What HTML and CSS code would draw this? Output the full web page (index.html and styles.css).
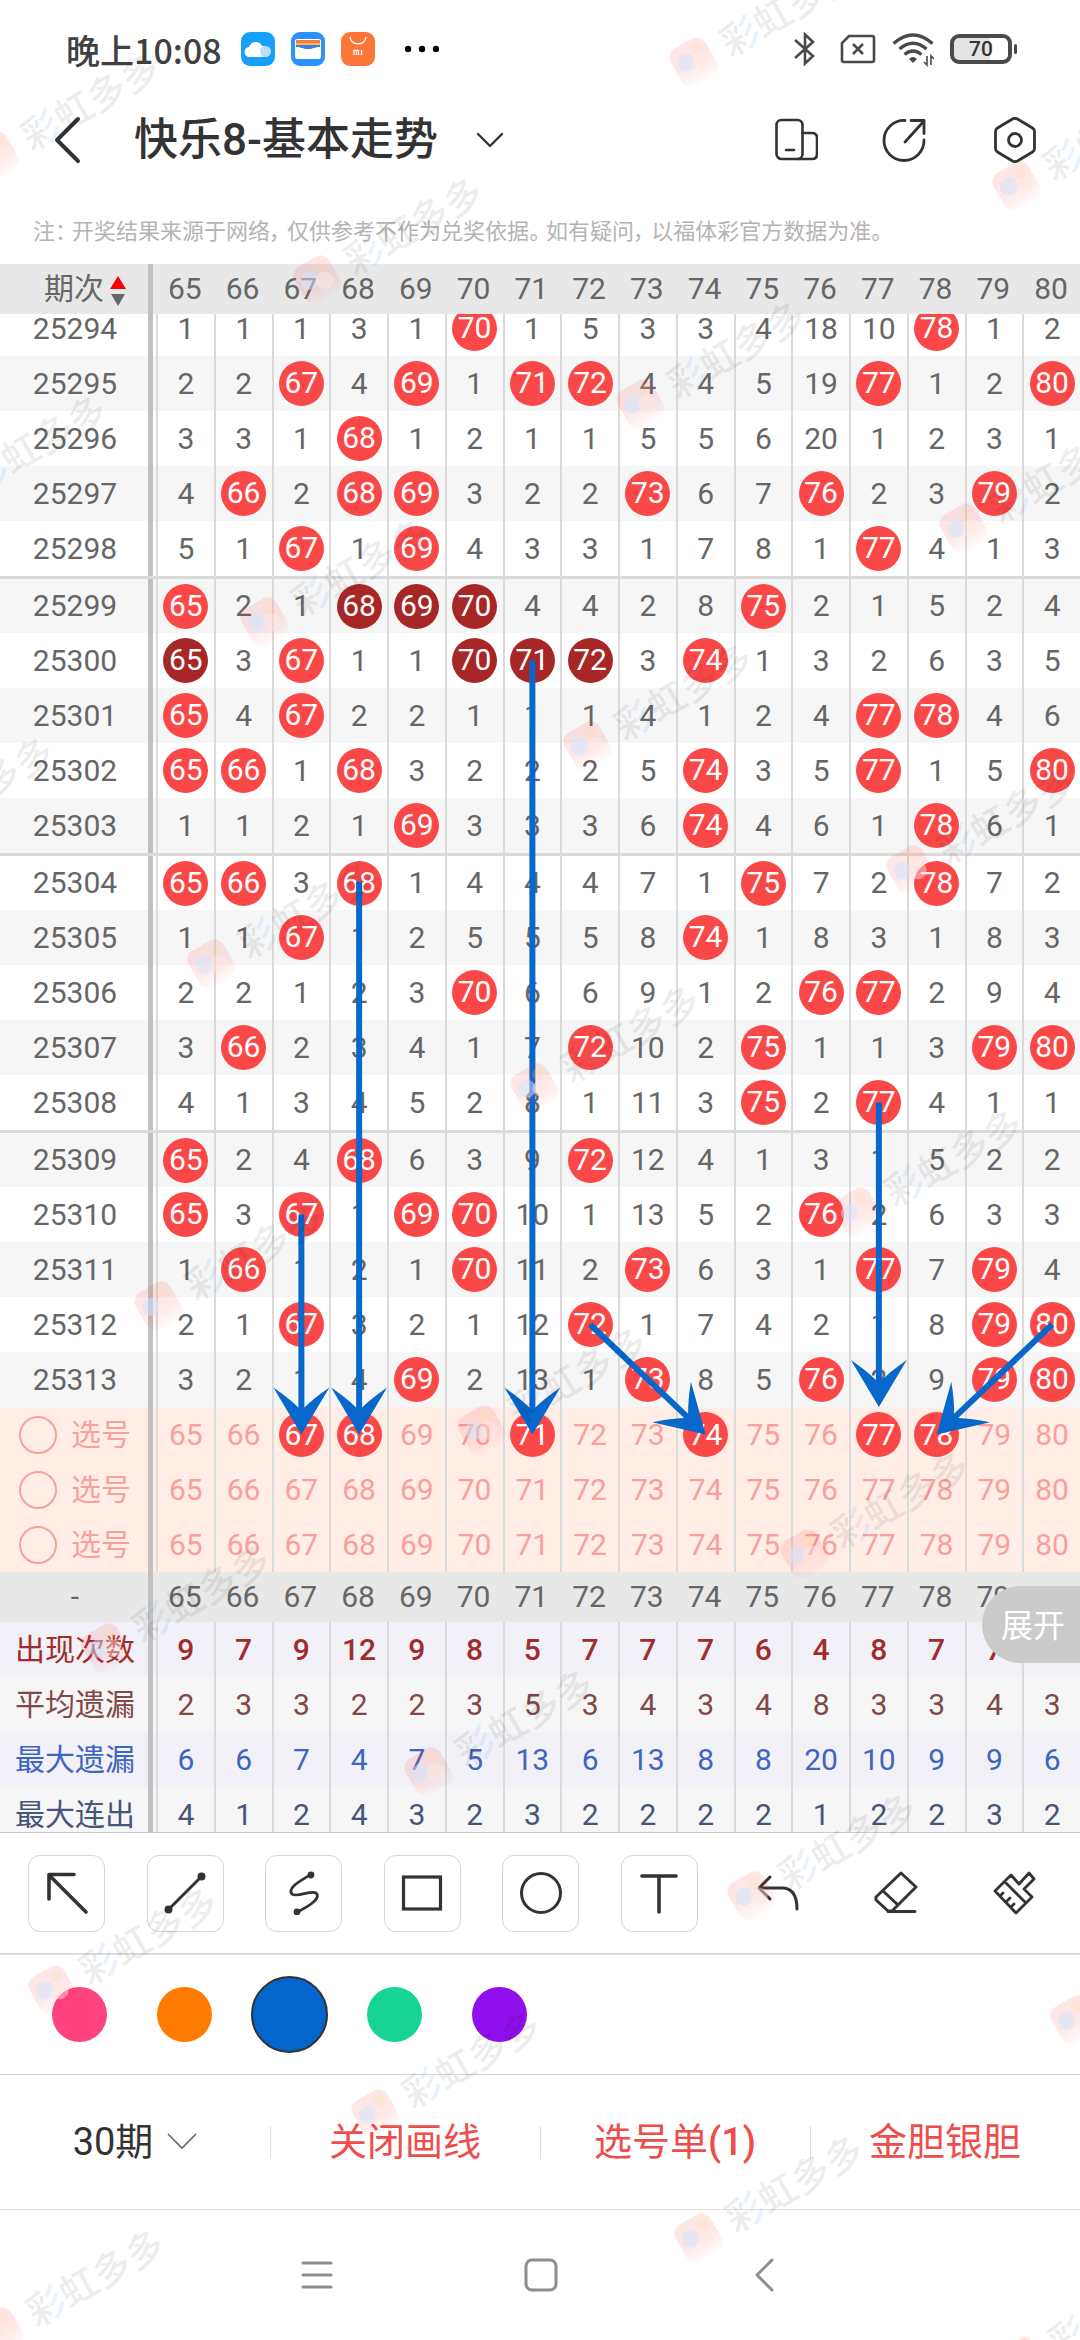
FILE: index.html
```html
<!DOCTYPE html>
<html lang="zh-CN">
<head>
    <meta charset="UTF-8">
    <meta name="viewport" content="width=device-width, initial-scale=1.0">
    <title>快乐8-基本走势</title>
    <link rel="stylesheet" href="styles.css">
</head>
<body>

<div class="status-bar">
    <span class="clock">晚上10:08</span>
    <svg class="app-icon" width="34" height="34" viewBox="0 0 34 34">
        <rect width="34" height="34" rx="9" fill="#14a0fb"/>
        <path d="M9 25a5 5 0 0 1-1-10 7 7 0 0 1 13-1 6 6 0 0 1 4 11z" fill="#fff"/>
        <circle cx="24.500" cy="19.500" r="5.500" fill="#b9dffb"/>
    </svg>
    <svg class="app-icon" width="34" height="34" viewBox="0 0 34 34">
        <rect width="34" height="34" rx="9" fill="#2b93fb"/>
        <rect x="4" y="7" width="26" height="20" rx="2" fill="#fff"/>
        <path d="M5 8h24v3H5z" fill="#f8784a"/>
        <path d="M5 11h24v2H5z" fill="#fbc02f"/>
        <path d="M5 13h24v2c-6 0-6 2-12 2s-6-2-12-2z" fill="#3a7cf0"/>
    </svg>
    <svg class="app-icon" width="34" height="34" viewBox="0 0 34 34">
        <rect width="34" height="34" rx="9" fill="#fd7638"/>
        <path d="M9 5c1 9 15 9 16 0" fill="none" stroke="#fff" stroke-width="1.500"/>
        <path d="M13 23v-4.500h4.500V23M15.500 20v3M20.500 18v5" fill="none" stroke="#fff" stroke-width="1.300"/>
    </svg>
    <svg class="dots" width="34" height="8" viewBox="0 0 34 8">
        <circle cx="3" cy="4" r="3.200"/><circle cx="17" cy="4" r="3.200"/><circle cx="31" cy="4" r="3.200"/>
    </svg>
    <div class="status-right">
        <svg width="22" height="36" viewBox="0 0 22 36" fill="none" stroke="#4a4a4a" stroke-width="2.600">
            <path d="M1 9l18 16-8 7.500V3.500L19 11 1 27"/>
        </svg>
        <svg width="36" height="30" viewBox="0 0 36 30" fill="none" stroke="#4a4a4a" stroke-width="2.600">
            <path d="M9 2h23q2 0 2 2v22q0 2-2 2H4q-2 0-2-2V9z"/>
            <path d="M13 10l10 10M23 10L13 20"/>
        </svg>
        <svg width="42" height="36" viewBox="0 0 42 36" fill="none" stroke="#4a4a4a" stroke-width="3.400">
            <path d="M1.500 12.500q19.500-17 39 0"/>
            <path d="M7.500 18q13.500-11.500 27 0"/>
            <path d="M12.500 23.500q8.500-7 17 0"/>
            <path d="M17 28q4-4 8 0l-4 4z" fill="#4a4a4a" stroke="none"/>
            <path d="M35 25v9l-3-3M39 34v-9l3 3" stroke-width="1.600"/>
        </svg>
        <span class="battery">70</span>
    </div>
</div>

<header class="title-bar">
    <button class="icon-btn back" aria-label="返回">
        <svg width="28" height="48" viewBox="0 0 28 48"><path d="M25 3L4 24l21 21" stroke-width="4"/></svg>
    </button>
    <button class="title-btn">
        <h1>快乐8-基本走势</h1>
        <svg width="28" height="18" viewBox="0 0 28 18"><path d="M2 3l12 12L26 3" stroke-width="2.400"/></svg>
    </button>
    <div class="title-actions">
        <button class="icon-btn" aria-label="横屏">
            <svg width="43" height="46" viewBox="0 0 43 46" stroke-width="2.600">
                <rect x="1.500" y="3" width="26" height="39" rx="5"/>
                <path d="M27.500 16H37q5 0 5 5v16q0 5-5 5H23M11 33h8"/>
            </svg>
        </button>
        <button class="icon-btn" aria-label="分享">
            <svg width="46" height="46" viewBox="0 0 46 46" stroke-width="2.800">
                <path d="M23 3.500A20 20 0 1 0 42 23M23 25L42 4M29 3.500h13v13"/>
            </svg>
        </button>
        <button class="icon-btn" aria-label="设置">
            <svg width="46" height="46" viewBox="0 0 46 46" stroke-width="2.800">
                <path d="M20.500 2q2.500-1.300 5 0l15 9q2 1.200 2 3.500v17q0 2.300-2 3.500l-15 9q-2.500 1.300-5 0l-15-9q-2-1.200-2-3.500v-17q0-2.300 2-3.500z"/>
                <circle cx="23" cy="23" r="6.500"/>
            </svg>
        </button>
    </div>
</header>

<p class="note">注<span class="stop">：</span>开奖结果来源于网络<span class="stop">，</span>仅供参考不作为兑奖依据<span class="stop">。</span>如有疑问<span class="stop">，</span>以福体彩官方数据为准。</p>

<main class="chart">
    <div class="chart-scroll" id="scroll">
        <div class="chart-inner" id="inner">
            <table>
                <thead>
                    <tr id="head">
                        <th scope="col" class="issue-head">期次<svg class="sort" width="16" height="30" viewBox="0 0 16 30"><path d="M8 0l8 13H0z" fill="#f00"/><path d="M8 30l7-12H1z" fill="#666"/></svg></th>
                    </tr>
                </thead>
                <tbody id="rows"></tbody>
                <tbody id="picks"></tbody>
                <tbody id="stats"></tbody>
            </table>
            <svg class="lines" id="lines"></svg>
        </div>
    </div>
    <button class="expand">展开</button>
</main>

<div class="tools">
    <button class="tool boxed" aria-label="箭头"><svg width="44" height="44" viewBox="0 0 44 44" stroke-width="3.600"><path d="M41 41L4 4M4 28V3.500h25"/></svg></button>
    <button class="tool boxed" aria-label="直线"><svg width="44" height="44" viewBox="0 0 44 44" stroke-width="3"><path d="M5 39L39 5"/><circle cx="5.500" cy="38.500" r="2.500" fill="#333"/><circle cx="38.500" cy="5.500" r="2.500" fill="#333"/></svg></button>
    <button class="tool boxed" aria-label="曲线"><svg width="44" height="44" viewBox="0 0 44 44" stroke-width="2.800"><path d="M28 4C18 10 5 17 10 23c4 4 19-4 24-1 6 5-8 14-19 19"/><circle cx="29" cy="4" r="2" fill="#333"/><circle cx="15" cy="41" r="2" fill="#333"/></svg></button>
    <button class="tool boxed" aria-label="矩形"><svg width="44" height="44" viewBox="0 0 44 44" stroke-width="3.200"><rect x="3.500" y="6" width="37" height="32" stroke-linejoin="miter"/></svg></button>
    <button class="tool boxed" aria-label="圆形"><svg width="44" height="44" viewBox="0 0 44 44" stroke-width="3"><circle cx="22" cy="22" r="19.500"/></svg></button>
    <button class="tool boxed" aria-label="文字"><svg width="44" height="44" viewBox="0 0 44 44" stroke-width="3.600"><path d="M5 5h34M22 5v36"/></svg></button>
    <button class="tool" aria-label="撤销"><svg width="44" height="44" viewBox="0 0 44 44" stroke-width="3"><path d="M14 6L3 17l11 11M3 17h23q15 0 15 21"/></svg></button>
    <button class="tool" aria-label="橡皮"><svg width="44" height="44" viewBox="0 0 44 44" stroke-width="3"><path d="M27 2l15 14-24 24h-4L2 29v-3zM9 20l15 14M14 40.500h27"/></svg></button>
    <button class="tool" aria-label="清空"><svg width="44" height="44" viewBox="0 0 44 44" stroke-width="2.800"><path d="M18 4l8 9L36 2l5 6-10 10 8 8-16 16L2 20zM12 11l20 20M7 25l3-3M13 31l4-4M18 36l3-3"/></svg></button>
</div>

<div class="palette">
    <label class="slot"><input type="radio" name="color" class="swatch pink" aria-label="粉色"></label>
    <label class="slot"><input type="radio" name="color" class="swatch orange" aria-label="橙色"></label>
    <label class="slot"><input type="radio" name="color" class="swatch blue" aria-label="蓝色" checked></label>
    <label class="slot"><input type="radio" name="color" class="swatch green" aria-label="绿色"></label>
    <label class="slot"><input type="radio" name="color" class="swatch purple" aria-label="紫色"></label>
</div>

<div class="bottom-bar">
    <div class="bottom-item">
        <select class="period" aria-label="期数"><option>30期</option></select>
        <svg width="30" height="18" viewBox="0 0 30 18"><path d="M1 1l14 14L29 1" fill="none" stroke="#666" stroke-width="1.600"/></svg>
    </div>
    <button class="bottom-item red">关闭画线</button>
    <button class="bottom-item red">选号单<b>(1)</b></button>
    <button class="bottom-item red">金胆银胆</button>
</div>

<nav class="sys-nav">
    <button aria-label="菜单"><svg width="34" height="34" viewBox="0 0 34 34"><path d="M3 5h28M3 17h28M3 29h28"/></svg></button>
    <button aria-label="主页"><svg width="34" height="34" viewBox="0 0 34 34"><rect x="2" y="2" width="30" height="30" rx="6"/></svg></button>
    <button aria-label="后退"><svg width="34" height="34" viewBox="0 0 34 34"><path d="M24 2L9 17l15 15"/></svg></button>
</nav>

<!-- 水印 -->
<svg class="watermark" aria-hidden="true">
    <defs>
        <linearGradient id="rainbow" x1="0" y1="0" x2="1" y2="0">
            <stop offset="0.550" stop-color="#000" stop-opacity="0.070"/>
            <stop offset="0.560" stop-color="#2a8cff" stop-opacity="0.100"/>
        </linearGradient>
        <linearGradient id="badge" x1="0" y1="0" x2="0" y2="1">
            <stop offset="0.500" stop-color="#f22" stop-opacity="0.110"/>
            <stop offset="1" stop-color="#f22" stop-opacity="0.020"/>
        </linearGradient>
        <g id="mark">
            <g transform="rotate(-30)">
                <rect x="-20" y="-20" width="40" height="42" rx="10" fill="url(#badge)"/>
                <circle cx="10" cy="-9" r="6" fill="#fd9" fill-opacity="0.200"/>
                <circle cx="-7" cy="-2" r="9" fill="#cfe6ff" fill-opacity="0.500"/>
                <circle cx="6" cy="5" r="9" fill="#ffe9e4" fill-opacity="0.450"/>
                <text x="34" y="16" fill="url(#rainbow)">彩</text>
                <text x="72" y="16">虹多多</text>
            </g>
        </g>
    </defs>
    <g id="marks"></g>
</svg>

<script src="chart.js"></script>
</body>
</html>
```
FILE: styles.css
```css
* {
    box-sizing: border-box;
}
body {
    margin: 0;
    height: 100vh;
    display: flex;
    flex-direction: column;
    background: #fff;
    color: #333;
    font-family: Roboto, "Noto Sans CJK SC", sans-serif;
    overflow: hidden;
}
button, select {
    margin: 0;
    padding: 0;
    border: 0;
    background: none;
    color: inherit;
    font: inherit;
}
svg {
    display: block;
    flex: none;
}

/* 状态栏 */
.status-bar {
    height: 98px;
    padding: 0 68px 0 66px;
    display: flex;
    align-items: center;
    flex: none;
}
.clock {
    font: 500 34px "Noto Sans CJK SC", sans-serif;
    color: #404040;
    margin-right: 19px;
}
.app-icon {
    margin-right: 16px;
}
.dots {
    margin-left: 14px;
}
.status-right {
    margin-left: auto;
    display: flex;
    align-items: center;
    gap: 16px;
}
.status-right svg:first-child {
    margin-right: 8px;
}
.battery {
    position: relative;
    width: 62px;
    height: 30px;
    border: 4px solid #4a4a4a;
    border-radius: 9px;
    background: linear-gradient(90deg, #e4e4e4 36px, #fff 36px);
    font: 500 21px/22px Roboto, sans-serif;
    text-align: center;
}
.battery::after {
    content: "";
    position: absolute;
    right: -9px;
    top: 6px;
    width: 3px;
    height: 10px;
    border-radius: 2px;
    background: #4a4a4a;
}

/* 标题栏 */
.title-bar {
    height: 84px;
    padding: 0 42px 0 53px;
    display: flex;
    align-items: center;
    flex: none;
}
.title-bar svg {
    fill: none;
    stroke: #333;
    stroke-linecap: round;
    stroke-linejoin: round;
}
.title-btn {
    display: flex;
    align-items: center;
    gap: 38px;
    margin-left: 53px;
}
h1 {
    margin: 0;
    font-size: 44px;
    font-weight: 500;
    line-height: 60px;
}
.title-actions {
    margin-left: auto;
    display: flex;
    gap: 64px;
}
.note {
    margin: 0;
    padding: 36px 33px 18px;
    font-size: 22px;
    line-height: 28px;
    color: #b4b4b4;
    font-feature-settings: "palt";
    white-space: nowrap;
    flex: none;
}
.stop {
    margin-right: 6px;
}

/* 走势表 */
.chart {
    position: relative;
    flex: 1;
    min-height: 0;
    border-bottom: 1px solid #ccc;
}
.chart-scroll {
    height: 100%;
    overflow-y: auto;
    scrollbar-width: none;
}
.chart-inner {
    position: relative;
    padding-bottom: 20px;
}
table {
    width: 100%;
    table-layout: fixed;
    border-collapse: separate;
    border-spacing: 0;
    font-size: 30px;
    line-height: 36px;
    color: #666;
    text-align: center;
}
th, td {
    height: 55px;
    padding: 0;
    font-weight: 400;
}
td {
    border-left: 2px solid #dadada;
}
thead th, .foot-head th {
    height: 50px;
    background-color: #e8e8e8;
}
th:first-child {
    width: 156px;
    padding-right: 6px;
    white-space: nowrap;
    background-image: linear-gradient(#c0c0c0, #c0c0c0);
    background-position: 148px 0;
    background-size: 5px 100%;
    background-repeat: no-repeat;
}
thead {
    position: sticky;
    top: 0;
    z-index: 3;
}
th.issue-head {
    padding-left: 20px;
}
.sort {
    display: inline-block;
    vertical-align: middle;
    margin-left: 6px;
}
#rows tr:nth-child(even) {
    background: #f6f6f6;
}
.group th, .group td {
    height: 57px;
    border-top: 3px solid #dadada;
}
.ball {
    display: block;
    width: 45px;
    height: 45px;
    margin: 0 auto;
    border-radius: 50%;
    background: #fa4848;
    color: #fff;
    line-height: 43px;
}
.ball.dark {
    background: #a72626;
}
#picks {
    background: #ffede6;
    color: #f9a09d;
}
#picks label {
    display: flex;
    align-items: center;
    gap: 14px;
    padding-left: 19px;
}
#picks input {
    appearance: none;
    width: 38px;
    height: 38px;
    margin: 0;
    border: 2px solid #f9a09d;
    border-radius: 50%;
}
.times {
    color: #a02c2c;
    background: #f2f1f7;
}
.times td {
    font-weight: 500;
}
.average {
    color: #824848;
    background: #f6f6f6;
}
.longest {
    color: #3e65bf;
    background: #f2f1f7;
}
.streak {
    color: #48547a;
    background: #f6f6f6;
}
.lines {
    position: absolute;
    left: 0;
    top: 0;
    width: 100%;
    height: 100%;
    fill: #0767cb;
    stroke: #0767cb;
    pointer-events: none;
}
.expand {
    position: absolute;
    right: 0;
    bottom: 169px;
    width: 98px;
    height: 77px;
    padding: 0 0 4px 4px;
    border-radius: 39px 0 0 39px;
    background: #cbcbcb;
    color: #fff;
    font-size: 32px;
}

/* 画线工具 */
.tools {
    height: 122px;
    padding: 0 27px 0 28px;
    display: flex;
    align-items: center;
    justify-content: space-between;
    border-bottom: 2px solid #ddd;
    flex: none;
}
.tool {
    width: 77px;
    height: 77px;
    display: flex;
    align-items: center;
    justify-content: center;
}
.tool svg {
    fill: none;
    stroke: #333;
    stroke-linecap: round;
    stroke-linejoin: round;
}
.boxed {
    border: 1px solid #d4d4d4;
    border-radius: 12px;
}
.palette {
    height: 120px;
    padding: 0 41px;
    display: flex;
    align-items: center;
    gap: 28px;
    border-bottom: 1px solid #d4d4d4;
    flex: none;
}
.slot {
    width: 77px;
    display: flex;
    justify-content: center;
}
.swatch {
    appearance: none;
    width: 55px;
    height: 55px;
    margin: 0;
    border-radius: 50%;
}
.swatch:checked {
    width: 77px;
    height: 77px;
    border: 2px solid #333;
}
.pink { background: #ff437f; }
.orange { background: #ff7a00; }
.blue { background: #0366cc; }
.green { background: #18d494; }
.purple { background: #910fec; }

/* 底部 */
.bottom-bar {
    height: 135px;
    display: flex;
    align-items: center;
    border-bottom: 1px solid #e0e0e0;
    font-size: 38px;
    line-height: 50px;
    flex: none;
}
.bottom-item {
    flex: 1;
    display: flex;
    align-items: center;
    justify-content: center;
    gap: 14px;
}
button.bottom-item {
    gap: 0;
    background: linear-gradient(#ddd, #ddd) left center / 1px 33px no-repeat;
}
.bottom-item b {
    font-weight: 500;
}
.red {
    color: #ee4e4b;
}
.period {
    appearance: none;
    field-sizing: content;
}
.sys-nav {
    height: 130px;
    padding: 0 298px 0 300px;
    display: flex;
    align-items: center;
    justify-content: space-between;
    flex: none;
}
.sys-nav svg {
    fill: none;
    stroke: #8e8e8e;
    stroke-width: 3;
    stroke-linecap: round;
    stroke-linejoin: round;
}
.watermark {
    position: fixed;
    left: 0;
    top: 0;
    width: 100%;
    height: 100%;
    pointer-events: none;
    z-index: 10;
    font: 500 38px "Noto Sans CJK SC", sans-serif;
    fill: rgba(0, 0, 0, 0.07);
}
```
FILE: chart.js
```js
const FIRST = 65;
const LAST = 80;

const draws = {
    25294: '1 1 1 3 1 70 1 5 3 3 4 18 10 78 1 2',
    25295: '2 2 67 4 69 1 71 72 4 4 5 19 77 1 2 80',
    25296: '3 3 1 68 1 2 1 1 5 5 6 20 1 2 3 1',
    25297: '4 66 2 68 69 3 2 2 73 6 7 76 2 3 79 2',
    25298: '5 1 67 1 69 4 3 3 1 7 8 1 77 4 1 3',
    25299: '65 2 1 68 69 70 4 4 2 8 75 2 1 5 2 4',
    25300: '65 3 67 1 1 70 71 72 3 74 1 3 2 6 3 5',
    25301: '65 4 67 2 2 1 1 1 4 1 2 4 77 78 4 6',
    25302: '65 66 1 68 3 2 2 2 5 74 3 5 77 1 5 80',
    25303: '1 1 2 1 69 3 3 3 6 74 4 6 1 78 6 1',
    25304: '65 66 3 68 1 4 4 4 7 1 75 7 2 78 7 2',
    25305: '1 1 67 1 2 5 5 5 8 74 1 8 3 1 8 3',
    25306: '2 2 1 2 3 70 6 6 9 1 2 76 77 2 9 4',
    25307: '3 66 2 3 4 1 7 72 10 2 75 1 1 3 79 80',
    25308: '4 1 3 4 5 2 8 1 11 3 75 2 77 4 1 1',
    25309: '65 2 4 68 6 3 9 72 12 4 1 3 1 5 2 2',
    25310: '65 3 67 1 69 70 10 1 13 5 2 76 2 6 3 3',
    25311: '1 66 1 2 1 70 11 2 73 6 3 1 77 7 79 4',
    25312: '2 1 67 3 2 1 12 72 1 7 4 2 1 8 79 80',
    25313: '3 2 1 4 69 2 13 1 73 8 5 76 2 9 79 80'
};

const stats = [
    ['times', '出现次数', '9 7 9 12 9 8 5 7 7 7 6 4 8 7 7 8'],
    ['average', '平均遗漏', '2 3 3 2 2 3 5 3 4 3 4 8 3 3 4 3'],
    ['longest', '最大遗漏', '6 6 7 4 7 5 13 6 13 8 8 20 10 9 9 6'],
    ['streak', '最大连出', '4 1 2 4 3 2 3 2 2 2 2 1 2 2 3 2']
];

// 深色球
const dark = {
    25299: [68, 69, 70],
    25300: [65, 70, 71, 72]
};
const picked = [67, 68, 71, 74, 77, 78];

// 画线：[起点期次, 起点号码, 终点行, 终点号码]
const arrows = [
    ['25310', 67, 'pick0', 67],
    ['25304', 68, 'pick0', 68],
    ['25300', 71, 'pick0', 71],
    ['25308', 77, '25313', 77],
    ['25312', 72, 'pick0', 74],
    ['25312', 80, 'pick0', 78]
];

const numbers = [];
for (let n = FIRST; n <= LAST; n++) numbers.push(n);
const headCells = numbers.map(n => `<th scope="col">${n}</th>`).join('');

document.getElementById('head').insertAdjacentHTML('beforeend', headCells);

document.getElementById('rows').innerHTML = Object.keys(draws).map(issue => {
    const cells = draws[issue].split(' ').map(v => {
        if (v < FIRST) return `<td>${v}</td>`;
        const isDark = (dark[issue] || []).includes(Number(v));
        return `<td><span class="ball${isDark ? ' dark' : ''}">${v}</span></td>`;
    }).join('');
    // 每五期一条分隔线
    const group = issue % 5 === 4 && issue > 25294 ? ' class="group"' : '';
    return `<tr id="r${issue}"${group}><th scope="row">${issue}</th>${cells}</tr>`;
}).join('');

document.getElementById('picks').innerHTML = [0, 1, 2].map(i => {
    const cells = numbers.map(n => {
        const on = i === 0 && picked.includes(n);
        return `<td><button${on ? ' class="ball"' : ''}>${n}</button></td>`;
    }).join('');
    return `<tr id="rpick${i}"><th scope="row"><label><input type="radio" name="pick">选号</label></th>${cells}</tr>`;
}).join('');

document.getElementById('stats').innerHTML =
    `<tr class="foot-head"><th>-</th>${headCells}</tr>` +
    stats.map(([cls, name, values]) =>
        `<tr class="${cls}"><th scope="row">${name}</th>` +
        values.split(' ').map(v => `<td>${v}</td>`).join('') + '</tr>'
    ).join('');

function center(row, number) {
    const box = document.getElementById('inner').getBoundingClientRect();
    const cell = document.getElementById('r' + row).cells[number - FIRST + 1].getBoundingClientRect();
    return {
        x: cell.left + cell.width / 2 + 1 - box.left,
        y: cell.top + cell.height / 2 - box.top,
        half: cell.height / 2
    };
}

function drawArrows() {
    document.getElementById('lines').innerHTML = arrows.map(([r1, n1, r2, n2]) => {
        const a = center(r1, n1);
        const b = center(r2, n2);
        if (!r2.startsWith('pick')) b.y += b.half;
        const len = Math.hypot(b.x - a.x, b.y - a.y);
        const deg = Math.atan2(b.y - a.y, b.x - a.x) * 180 / Math.PI;
        return `<g transform="translate(${b.x} ${b.y}) rotate(${deg})">
            <path d="M${-len} 0H-24" stroke-width="6"/>
            <path d="M0 0L-47 -28Q-36 -12 -27 -3V3Q-36 12 -47 28Z" stroke="none"/>
        </g>`;
    }).join('');
}

function drawWatermark() {
    let html = '';
    for (let j = -4; j < 9; j++) {
        for (let i = -2; i < 8; i++) {
            const x = -6 + i * 323 - j * 53;
            const y = 155 + i * 124 + j * 342;
            if (x < -200 || x > innerWidth + 60 || y < -60 || y > innerHeight + 160) continue;
            html += `<use href="#mark" x="${x}" y="${y}"/>`;
        }
    }
    document.getElementById('marks').innerHTML = html;
}

function layout() {
    drawArrows();
    drawWatermark();
}

document.getElementById('scroll').scrollTop = 13;
layout();
window.addEventListener('resize', layout);
```
